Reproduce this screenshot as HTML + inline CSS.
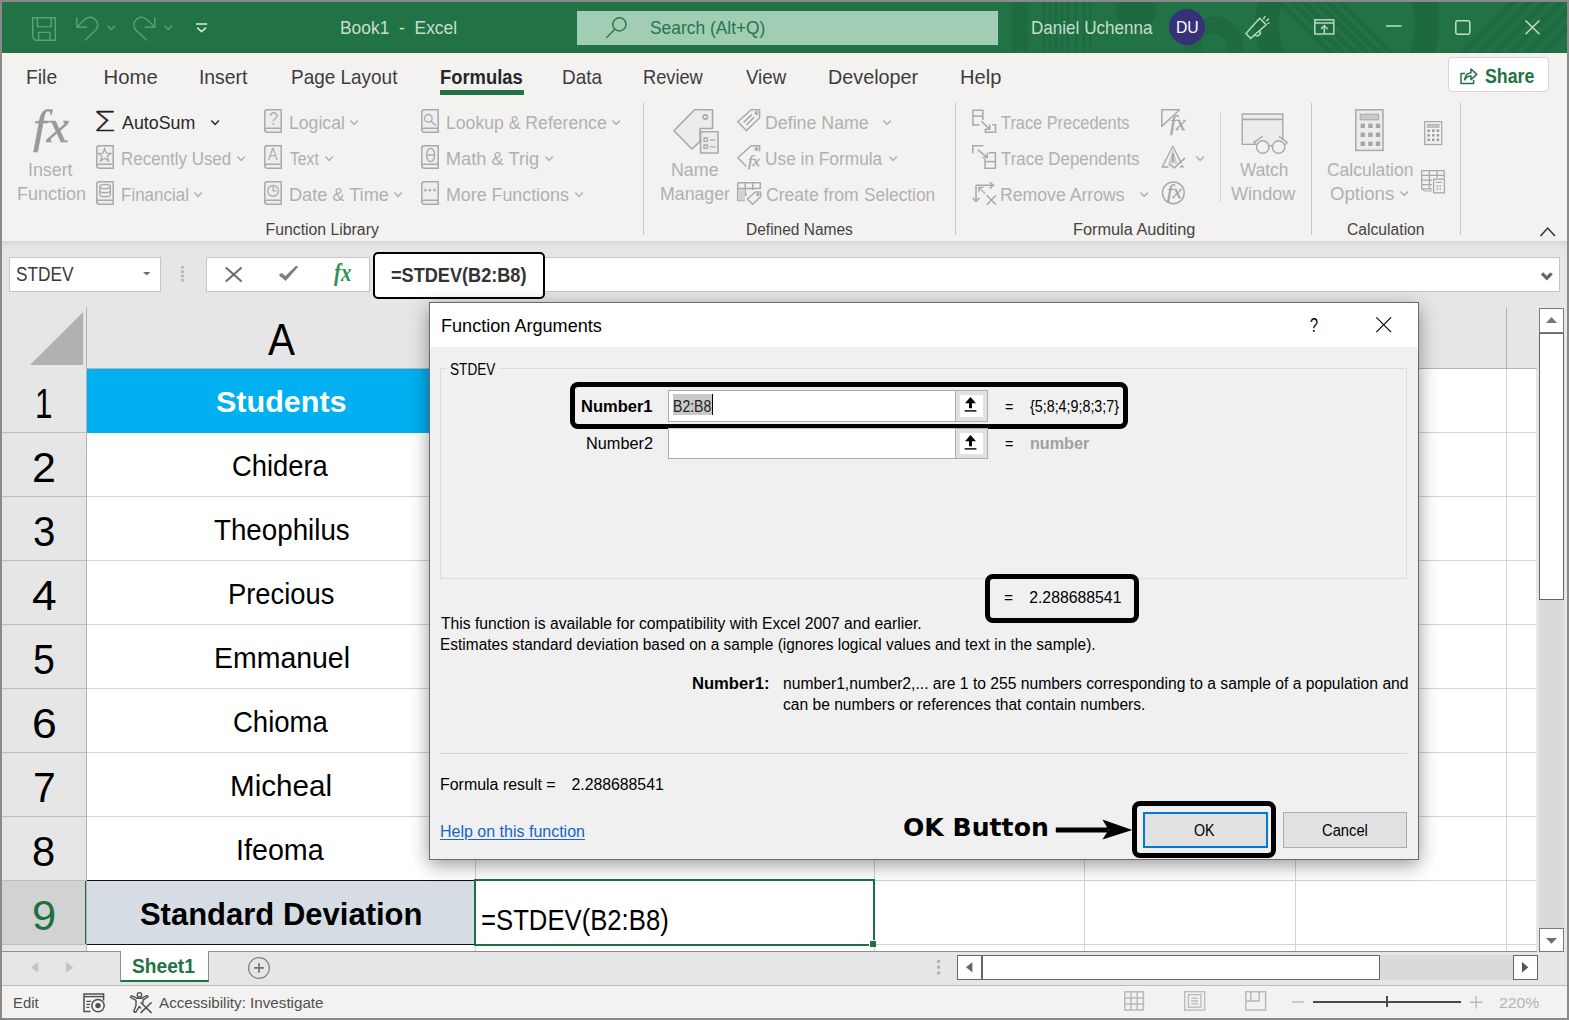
<!DOCTYPE html><html lang="en"><head><meta charset="utf-8"><title>Book1 - Excel</title><style>
html,body{margin:0;padding:0;background:#8a8a8a;}
body{width:1569px;height:1020px;overflow:hidden;font-family:"Liberation Sans",sans-serif;}
#app{position:relative;width:1569px;height:1020px;overflow:hidden;background:#8a8a8a;}
#app div,#app span,#app svg,#app a,#app button,#app header,#app nav,#app section,#app footer,#app label,#app p,#app h1{position:absolute;box-sizing:border-box;margin:0;padding:0;}
.t{white-space:pre;transform-origin:0 0;display:block;}
svg{overflow:visible;}
button{font:inherit;appearance:none;-webkit-appearance:none;text-align:left;}
</style></head><body><div id="app">
<div class="window" style="left:2px;top:2px;width:1565px;height:1016px;background:#e6e6e6;overflow:hidden;">
<header class="titlebar" style="left:0px;top:0px;width:1565px;height:51px;background:#217346;overflow:hidden;">
<svg style="left:0px;top:0px;" width="1565" height="51" viewBox="2 2 1565 51"><g fill="none" stroke="#1e6a3f" opacity="0.9">
<rect x="1012" y="0" width="16" height="51" fill="#1f6c41" stroke="none"/>
<path d="M1044 0v51M1050 0v51M1056 0v51M1062 0v51M1068 0v51M1076 0v51M1084 0v51M1090 0v51" stroke-width="2.2"/>
<circle cx="1136" cy="11" r="20" fill="#1f6940" stroke="none"/>
<circle cx="1214" cy="46" r="21" stroke-width="17" stroke="#1f6a40"/>
<circle cx="1347" cy="24" r="80" stroke-width="24" stroke="#1f6940"/>
<path d="M1285 -5l60 60M1297 -5l60 60M1309 -5l60 60M1321 -5l60 60M1333 -5l60 60M1273 -5l60 60" stroke-width="5" stroke="#1f6a40"/>
<path d="M1460 55l60 -60M1476 55l60 -60M1492 55l60 -60M1508 55l60 -60M1524 55l60 -60M1540 55l60 -60" stroke-width="6" stroke="#1f6a40"/>
</g></svg>
<svg style="left:30px;top:15px;" width="24" height="24" viewBox="0 0 24 24"><g fill="none" stroke="#5c9f7b" stroke-width="1.4"><path d="M0.7 0.7H23.3V23.3H3.6L0.7 20.4Z"/><path d="M5.4 0.7V9.6H19.2V0.7"/><path d="M6.6 23.3V15.4H18V23.3"/></g></svg>
<svg style="left:74px;top:15px;" width="22" height="24" viewBox="0 0 22 24"><g fill="none" stroke="#5c9f7b" stroke-width="1.4"><path d="M0.8 0.2V10.2H11"/><path d="M1.2 9.8L8.6 2.6A7.6 7.6 0 0 1 19.6 13.2L8.6 23.6"/></g></svg>
<svg style="left:105px;top:23px;" width="9" height="6" viewBox="0 0 9 6"><path d="M0.4 0.5L4.3 4.5L8.2 0.5" fill="none" stroke="#5c9f7b" stroke-width="1.4"/></svg>
<svg style="left:132px;top:15px;" width="22" height="24" viewBox="0 0 22 24"><g fill="none" stroke="#5c9f7b" stroke-width="1.4" transform="translate(21.6,0) scale(-1,1)"><path d="M0.8 0.2V10.2H11"/><path d="M1.2 9.8L8.6 2.6A7.6 7.6 0 0 1 19.6 13.2L8.6 23.6"/></g></svg>
<svg style="left:162px;top:23px;" width="9" height="6" viewBox="0 0 9 6"><path d="M0.4 0.5L4.3 4.5L8.2 0.5" fill="none" stroke="#5c9f7b" stroke-width="1.4"/></svg>
<svg style="left:194px;top:21px;" width="12" height="10" viewBox="0 0 12 10"><g fill="none" stroke="#d3e6da" stroke-width="1.6"><path d="M0 1H11.2"/><path d="M1.2 4.6L5.6 8.6L10 4.6"/></g></svg>
<span class="t" style="left:337.71px;top:17.00px;font-size:18.6px;line-height:18.6px;color:#c7ddd0;transform:scaleX(0.9364);">Book1  -  Excel</span>
<div class="search" style="left:575px;top:9px;width:420.5px;height:33.5px;background:#a0cdb4;">
<svg style="left:29px;top:5.5px;" width="21" height="22" viewBox="0 0 21 22"><g fill="none" stroke="#2a7a4d" stroke-width="1.5"><circle cx="13.4" cy="7.4" r="6.6"/><path d="M8.8 12.2L0.5 20.8"/></g></svg>
<span class="t" style="left:73.12px;top:8.00px;font-size:18.6px;line-height:18.6px;color:#24784a;transform:scaleX(0.9346);">Search (Alt+Q)</span>
</div>
<span class="t" style="left:1028.83px;top:17.00px;font-size:18.6px;line-height:18.6px;color:#c7ddd0;transform:scaleX(0.9183);">Daniel Uchenna</span>
<div class="avatar" style="left:1167px;top:7px;width:36px;height:36px;border-radius:50%;background:#373277;"></div>
<span class="t" style="left:1173.94px;top:17.00px;font-size:16.4px;line-height:16.4px;color:#fff;transform:scaleX(0.9595);">DU</span>
<svg style="left:1243px;top:12.5px;" width="25" height="25" viewBox="0 0 25 25"><g fill="none" stroke="#b9d6c5" stroke-width="1.5" stroke-linejoin="round"><path d="M14.6 3.2L21.2 9.8L5.6 23.4L1 18.6Z"/><path d="M9.8 19.6A3 3 0 0 0 14.6 16"/><path d="M18.4 4.4L20 1.2M21 6.2L23.8 3.6M22.4 8.6L24.4 8"/></g></svg>
<svg style="left:1312px;top:17px;" width="21" height="16" viewBox="0 0 21 16"><g fill="none" stroke="#b9d6c5" stroke-width="1.5"><rect x="0.8" y="0.8" width="19" height="14.2"/><path d="M0.8 4H19.8"/><path d="M10.3 14.5V7M7 10L10.3 6.6L13.6 10"/></g></svg>
<svg style="left:1384px;top:23px;" width="16" height="2" viewBox="0 0 16 2"><path d="M0 1H15.4" stroke="#c3dccd" stroke-width="1.5"/></svg>
<svg style="left:1453px;top:17.6px;" width="16" height="15" viewBox="0 0 16 15"><rect x="0.8" y="0.8" width="14" height="13.4" rx="1.6" fill="none" stroke="#c3dccd" stroke-width="1.5"/></svg>
<svg style="left:1522.5px;top:18px;" width="15" height="15" viewBox="0 0 15 15"><path d="M0.5 0.5L14.5 14.3M14.5 0.5L0.5 14.3" fill="none" stroke="#c3dccd" stroke-width="1.5"/></svg>
</header>
<section class="ribbon" style="left:0px;top:51px;width:1565px;height:188px;background:#f3f2f1;">
<nav class="tabs" style="left:0px;top:0px;width:1565px;height:47px;">
<span class="t" style="left:24.45px;top:14.00px;font-size:20.3px;line-height:20.3px;color:#3d3d3d;transform:scaleX(0.9538);">File</span>
<span class="t" style="left:101.57px;top:14.00px;font-size:20.3px;line-height:20.3px;color:#3d3d3d;">Home</span>
<span class="t" style="left:197.06px;top:14.00px;font-size:20.3px;line-height:20.3px;color:#3d3d3d;transform:scaleX(0.9524);">Insert</span>
<span class="t" style="left:289.18px;top:14.00px;font-size:20.3px;line-height:20.3px;color:#3d3d3d;transform:scaleX(0.9344);">Page Layout</span>
<span class="t" style="left:559.88px;top:14.00px;font-size:20.3px;line-height:20.3px;color:#3d3d3d;transform:scaleX(0.9355);">Data</span>
<span class="t" style="left:640.94px;top:14.00px;font-size:20.3px;line-height:20.3px;color:#3d3d3d;transform:scaleX(0.8983);">Review</span>
<span class="t" style="left:743.65px;top:14.00px;font-size:20.3px;line-height:20.3px;color:#3d3d3d;transform:scaleX(0.9211);">View</span>
<span class="t" style="left:825.52px;top:14.00px;font-size:20.3px;line-height:20.3px;color:#3d3d3d;transform:scaleX(0.9747);">Developer</span>
<span class="t" style="left:957.69px;top:14.00px;font-size:20.3px;line-height:20.3px;color:#3d3d3d;transform:scaleX(0.9903);">Help</span>
<span class="t" style="left:438.40px;top:14.00px;font-size:20.3px;line-height:20.3px;color:#262626;font-weight:700;transform:scaleX(0.9062);">Formulas</span>
<div class="tabline" style="left:438.2px;top:37.4px;width:83.8px;height:4.2px;background:#217346;"></div>
<button class="share" style="left:1446.2px;top:4.3px;width:100.6px;height:35.2px;background:#fff;border:1px solid #d6d6d6;border-radius:4px;">
<svg style="left:10.4px;top:8.3px;" width="18" height="17.6" viewBox="0 0 18 17.6"><g fill="none" stroke="#217346" stroke-width="1.5" stroke-linejoin="round"><path d="M5 6.4H1V16.6H13.6V13"/><path d="M4.6 12.8C5.2 8.4 8 6 11 5.8V2L16.8 7.4L11 12.6V9C8.4 9 6.2 10.2 4.6 12.8Z"/></g></svg>
<span class="t" style="left:36.01px;top:8.70px;font-size:19.6px;line-height:19.6px;color:#217346;font-weight:700;transform:scaleX(0.9068);">Share</span>
</button>
</nav>
<div class="group" style="left:8px;top:50px;width:633px;height:138px;">
<span class="t" style="left:22.70px;top:0.00px;font-size:47px;line-height:47px;color:#9a9a9a;font-style:italic;font-family:'Liberation Serif',serif;transform:scaleX(1.0593);-webkit-text-stroke:0.5px #9a9a9a;">fx</span>
<span class="t" style="left:18.39px;top:58.00px;font-size:18.3px;line-height:18.3px;color:#b0b0b0;transform:scaleX(0.9747);">Insert</span>
<span class="t" style="left:6.76px;top:82.00px;font-size:18.3px;line-height:18.3px;color:#b0b0b0;transform:scaleX(0.9826);">Function</span>
<span class="t" style="left:83.03px;top:5.00px;font-size:27.2px;line-height:27.2px;color:#1f1f1f;font-family:'DejaVu Sans Light','DejaVu Sans',sans-serif;transform:scaleX(1.3461);-webkit-text-stroke:0.35px #1f1f1f;">Σ</span>
<span class="t" style="left:112.30px;top:11.00px;font-size:18.3px;line-height:18.3px;color:#262626;transform:scaleX(0.9748);">AutoSum</span>
<svg style="left:201px;top:16.85px;" width="8.2" height="5.4" viewBox="0 0 8.2 5.4"><path d="M0.4 0.5L4.1 4.4L7.8 0.5" fill="none" stroke="#262626" stroke-width="1.5"/></svg>
<svg style="left:86.2px;top:41.9px;" width="18" height="24" viewBox="0 0 18 24"><g fill="none" stroke="#a9a9a9" stroke-width="1.5"><path d="M17.2 0.8H3.2A2.4 2.4 0 0 0 0.8 3.2V20.8A2.4 2.4 0 0 0 3.2 23.2H17.2Z" fill="#eeeeee"/><path d="M0.8 21.2A2 2 0 0 1 2.9 19.2H17.2" fill="#f3f2f1"/><path d="M8.6 3.5L10.2 8.1L15.2 8.3L11.3 11.3L12.7 16.0L8.6 13.2L4.5 16.0L5.9 11.3L2.0 8.3L7.0 8.1Z" stroke-width="1.2"/></g></svg>
<span class="t" style="left:110.94px;top:47.00px;font-size:18.3px;line-height:18.3px;color:#b0b0b0;transform:scaleX(0.9271);">Recently Used</span>
<svg style="left:227px;top:52.8px;" width="8.2" height="5.4" viewBox="0 0 8.2 5.4"><path d="M0.4 0.5L4.1 4.4L7.8 0.5" fill="none" stroke="#b0b0b0" stroke-width="1.5"/></svg>
<svg style="left:86.2px;top:77.9px;" width="18" height="24" viewBox="0 0 18 24"><g fill="none" stroke="#a9a9a9" stroke-width="1.5"><path d="M17.2 0.8H3.2A2.4 2.4 0 0 0 0.8 3.2V20.8A2.4 2.4 0 0 0 3.2 23.2H17.2Z" fill="#eeeeee"/><path d="M0.8 21.2A2 2 0 0 1 2.9 19.2H17.2" fill="#f3f2f1"/><g stroke-width="1.3"><ellipse cx="9.05" cy="5.5" rx="5.3" ry="2.2"/><path d="M3.75 5.5V13.4A5.3 2.2 0 0 0 14.35 13.4V5.5"/><path d="M3.75 9.4A5.3 2.2 0 0 0 14.35 9.4"/></g></g></svg>
<span class="t" style="left:110.94px;top:83.00px;font-size:18.3px;line-height:18.3px;color:#b0b0b0;transform:scaleX(0.9293);">Financial</span>
<svg style="left:184px;top:88.7px;" width="8.2" height="5.4" viewBox="0 0 8.2 5.4"><path d="M0.4 0.5L4.1 4.4L7.8 0.5" fill="none" stroke="#b0b0b0" stroke-width="1.5"/></svg>
<svg style="left:254px;top:5.9px;" width="18" height="24" viewBox="0 0 18 24"><g fill="none" stroke="#a9a9a9" stroke-width="1.5"><path d="M17.2 0.8H3.2A2.4 2.4 0 0 0 0.8 3.2V20.8A2.4 2.4 0 0 0 3.2 23.2H17.2Z" fill="#eeeeee"/><path d="M0.8 21.2A2 2 0 0 1 2.9 19.2H17.2" fill="#f3f2f1"/></g></svg>
<span class="t" style="left:259.24px;top:7.00px;font-size:18.6px;line-height:18.6px;color:#b2b2b2;transform:scaleX(0.8849);">?</span>
<span class="t" style="left:278.89px;top:11.00px;font-size:18.3px;line-height:18.3px;color:#b0b0b0;transform:scaleX(0.9646);">Logical</span>
<svg style="left:340.4px;top:16.85px;" width="8.2" height="5.4" viewBox="0 0 8.2 5.4"><path d="M0.4 0.5L4.1 4.4L7.8 0.5" fill="none" stroke="#b0b0b0" stroke-width="1.5"/></svg>
<svg style="left:254px;top:41.9px;" width="18" height="24" viewBox="0 0 18 24"><g fill="none" stroke="#a9a9a9" stroke-width="1.5"><path d="M17.2 0.8H3.2A2.4 2.4 0 0 0 0.8 3.2V20.8A2.4 2.4 0 0 0 3.2 23.2H17.2Z" fill="#eeeeee"/><path d="M0.8 21.2A2 2 0 0 1 2.9 19.2H17.2" fill="#f3f2f1"/></g></svg>
<span class="t" style="left:258.40px;top:44.00px;font-size:16px;line-height:16px;color:#aeaeae;transform:scaleX(0.9023);">A</span>
<span class="t" style="left:279.99px;top:47.00px;font-size:18.3px;line-height:18.3px;color:#b0b0b0;transform:scaleX(0.8586);">Text</span>
<svg style="left:315.1px;top:52.8px;" width="8.2" height="5.4" viewBox="0 0 8.2 5.4"><path d="M0.4 0.5L4.1 4.4L7.8 0.5" fill="none" stroke="#b0b0b0" stroke-width="1.5"/></svg>
<svg style="left:254px;top:77.9px;" width="18" height="24" viewBox="0 0 18 24"><g fill="none" stroke="#a9a9a9" stroke-width="1.5"><path d="M17.2 0.8H3.2A2.4 2.4 0 0 0 0.8 3.2V20.8A2.4 2.4 0 0 0 3.2 23.2H17.2Z" fill="#eeeeee"/><path d="M0.8 21.2A2 2 0 0 1 2.9 19.2H17.2" fill="#f3f2f1"/><g stroke-width="1.3"><circle cx="9.1" cy="9.9" r="5.4"/><path d="M9.1 5.6V9.9H12.6"/></g></g></svg>
<span class="t" style="left:278.85px;top:83.00px;font-size:18.3px;line-height:18.3px;color:#b0b0b0;transform:scaleX(0.9928);">Date &amp; Time</span>
<svg style="left:384.4px;top:88.7px;" width="8.2" height="5.4" viewBox="0 0 8.2 5.4"><path d="M0.4 0.5L4.1 4.4L7.8 0.5" fill="none" stroke="#b0b0b0" stroke-width="1.5"/></svg>
<svg style="left:411px;top:5.9px;" width="18" height="24" viewBox="0 0 18 24"><g fill="none" stroke="#a9a9a9" stroke-width="1.5"><path d="M17.2 0.8H3.2A2.4 2.4 0 0 0 0.8 3.2V20.8A2.4 2.4 0 0 0 3.2 23.2H17.2Z" fill="#eeeeee"/><path d="M0.8 21.2A2 2 0 0 1 2.9 19.2H17.2" fill="#f3f2f1"/><g stroke-width="1.3"><circle cx="7.3" cy="9.3" r="3.8"/><path d="M10 12L14.8 16.4"/></g></g></svg>
<span class="t" style="left:435.79px;top:11.00px;font-size:18.3px;line-height:18.3px;color:#b0b0b0;transform:scaleX(0.9641);">Lookup &amp; Reference</span>
<svg style="left:602.4px;top:16.85px;" width="8.2" height="5.4" viewBox="0 0 8.2 5.4"><path d="M0.4 0.5L4.1 4.4L7.8 0.5" fill="none" stroke="#b0b0b0" stroke-width="1.5"/></svg>
<svg style="left:411px;top:41.9px;" width="18" height="24" viewBox="0 0 18 24"><g fill="none" stroke="#a9a9a9" stroke-width="1.5"><path d="M17.2 0.8H3.2A2.4 2.4 0 0 0 0.8 3.2V20.8A2.4 2.4 0 0 0 3.2 23.2H17.2Z" fill="#eeeeee"/><path d="M0.8 21.2A2 2 0 0 1 2.9 19.2H17.2" fill="#f3f2f1"/><g stroke-width="1.3"><ellipse cx="9.6" cy="10" rx="4" ry="6.6"/><path d="M5.6 10H13.6"/></g></g></svg>
<span class="t" style="left:435.74px;top:47.00px;font-size:18.3px;line-height:18.3px;color:#b0b0b0;">Math &amp; Trig</span>
<svg style="left:535.2px;top:52.8px;" width="8.2" height="5.4" viewBox="0 0 8.2 5.4"><path d="M0.4 0.5L4.1 4.4L7.8 0.5" fill="none" stroke="#b0b0b0" stroke-width="1.5"/></svg>
<svg style="left:411px;top:77.9px;" width="18" height="24" viewBox="0 0 18 24"><g fill="none" stroke="#a9a9a9" stroke-width="1.5"><path d="M17.2 0.8H3.2A2.4 2.4 0 0 0 0.8 3.2V20.8A2.4 2.4 0 0 0 3.2 23.2H17.2Z" fill="#eeeeee"/><path d="M0.8 21.2A2 2 0 0 1 2.9 19.2H17.2" fill="#f3f2f1"/><g fill="#b0b0b0" stroke="none"><circle cx="4.4" cy="9.2" r="1.35"/><circle cx="8.9" cy="9.2" r="1.35"/><circle cx="13.5" cy="9.2" r="1.35"/></g></g></svg>
<span class="t" style="left:435.77px;top:83.00px;font-size:18.3px;line-height:18.3px;color:#b0b0b0;transform:scaleX(0.9748);">More Functions</span>
<svg style="left:565px;top:88.7px;" width="8.2" height="5.4" viewBox="0 0 8.2 5.4"><path d="M0.4 0.5L4.1 4.4L7.8 0.5" fill="none" stroke="#b0b0b0" stroke-width="1.5"/></svg>
<span class="t" style="left:255.54px;top:119.00px;font-size:15.8px;line-height:15.8px;color:#444;">Function Library</span>
</div>
<div class="sep" style="left:640.9px;top:50.3px;width:1px;height:131.5px;background:#c8c6c4;"></div>
<div class="group" style="left:642px;top:50px;width:311px;height:138px;">
<svg style="left:29px;top:6px;" width="46" height="45" viewBox="0 0 46 45"><g fill="none" stroke="#a9a9a9" stroke-width="1.6" stroke-linejoin="round"><path d="M39.6 19.5V0.8H21.6L0.9 21.8L19 40L27 32.4V19.5Z" fill="#ececec"/><circle cx="32.3" cy="8" r="2.1" fill="#f3f2f1"/><rect x="27.6" y="22.8" width="17.4" height="21.2" fill="#ececec"/><path d="M31 29H34.4V32.4H31ZM31 36H34.4V39.4H31ZM37 30.8H42.4M37 37.8H42.4" stroke-width="1.3"/></g></svg>
<span class="t" style="left:27.17px;top:58.00px;font-size:18.3px;line-height:18.3px;color:#b0b0b0;transform:scaleX(0.9748);">Name</span>
<span class="t" style="left:15.58px;top:82.00px;font-size:18.3px;line-height:18.3px;color:#b0b0b0;transform:scaleX(0.9702);">Manager</span>
<svg style="left:93px;top:6px;" width="24" height="23" viewBox="0 0 24 23"><g fill="none" stroke="#a9a9a9" stroke-width="1.5"stroke-linejoin="round"><path d="M22.6 0.8V8.8L9.4 21.6L0.8 12.8L14.2 0.8Z"/><circle cx="19.4" cy="4" r="1.2"/><path d="M6.6 13.4L15 5.4M9.2 16L17.4 8"/></g></svg>
<span class="t" style="left:120.88px;top:11.00px;font-size:18.3px;line-height:18.3px;color:#b0b0b0;transform:scaleX(0.9719);">Define Name</span>
<svg style="left:239.1px;top:16.85px;" width="8.2" height="5.4" viewBox="0 0 8.2 5.4"><path d="M0.4 0.5L4.1 4.4L7.8 0.5" fill="none" stroke="#b0b0b0" stroke-width="1.5"/></svg>
<svg style="left:93px;top:42px;" width="24" height="24" viewBox="0 0 24 24"><g fill="none" stroke="#a9a9a9" stroke-width="1.5" stroke-linejoin="round"><path d="M22.6 6.6V0.8H14.2L0.8 12.8L9.4 21.6"/><circle cx="19.4" cy="4" r="1.2"/></g></svg>
<span class="t" style="left:104.44px;top:50.00px;font-size:15.6px;line-height:15.6px;color:#a4a4a4;font-style:italic;font-family:'Liberation Serif',serif;transform:scaleX(1.0547);-webkit-text-stroke:0.3px #a4a4a4;">fx</span>
<span class="t" style="left:121.00px;top:47.00px;font-size:18.3px;line-height:18.3px;color:#b0b0b0;transform:scaleX(0.9458);">Use in Formula</span>
<svg style="left:245.2px;top:52.8px;" width="8.2" height="5.4" viewBox="0 0 8.2 5.4"><path d="M0.4 0.5L4.1 4.4L7.8 0.5" fill="none" stroke="#b0b0b0" stroke-width="1.5"/></svg>
<svg style="left:93px;top:79px;" width="25" height="23" viewBox="0 0 25 23"><g fill="none" stroke="#a9a9a9" stroke-width="1.5" stroke-linejoin="round"><path d="M0.7 0.7H23.3V7M0.7 0.7V18.6H8"/><path d="M0.7 6.6H23.3M0.7 12.6H10M8.2 0.7V14M15.8 0.7V8" /><rect x="1" y="7" width="7" height="11.4" fill="#d2d2d2" stroke="none"/><path d="M23.6 10V14.8L15.6 22.2L10.4 17L18.2 10Z" fill="#f3f2f1"/><circle cx="20.8" cy="12.6" r="0.9"/></g></svg>
<span class="t" style="left:121.52px;top:83.00px;font-size:18.3px;line-height:18.3px;color:#b0b0b0;transform:scaleX(0.9606);">Create from</span>
<span class="t" style="left:220.22px;top:83.00px;font-size:18.3px;line-height:18.3px;color:#b0b0b0;transform:scaleX(0.9469);">Selection</span>
<span class="t" style="left:101.66px;top:119.00px;font-size:15.8px;line-height:15.8px;color:#444;transform:scaleX(0.9815);">Defined Names</span>
</div>
<div class="sep" style="left:952.8px;top:50.3px;width:1px;height:131.5px;background:#c8c6c4;"></div>
<div class="group" style="left:954px;top:50px;width:355px;height:138px;">
<svg style="left:15.7px;top:6px;" width="25" height="24" viewBox="0 0 25 24"><g fill="none" stroke="#a9a9a9" stroke-width="1.5"><path d="M7.6 16H0.9V1.3H10.9V11"/><path d="M0.9 7.2H10.9"/><path d="M9.4 12.4L17.4 19.8M12.8 20.2H17.7V15.4"/><path d="M20.2 15.8H23.5V23.2H13.4V21"/></g></svg>
<span class="t" style="left:44.87px;top:11.00px;font-size:18.3px;line-height:18.3px;color:#b0b0b0;transform:scaleX(0.8939);">Trace Precedents</span>
<svg style="left:15.7px;top:42px;" width="25" height="24" viewBox="0 0 25 24"><g fill="none" stroke="#a9a9a9" stroke-width="1.5"><path d="M11.5 0.8H0.8V8.4"/><path d="M5.6 4.6L14.8 12.2M10.3 12.6H15.3V7.7"/><path d="M16.8 7.8H23.4V23.2H13V14"/><path d="M13 16.6H23.4"/></g></svg>
<span class="t" style="left:44.86px;top:47.00px;font-size:18.3px;line-height:18.3px;color:#b0b0b0;transform:scaleX(0.9256);">Trace Dependents</span>
<svg style="left:15.7px;top:78px;" width="25" height="25" viewBox="0 0 25 25"><g fill="none" stroke="#a9a9a9" stroke-width="1.5"><path d="M4 4V20M0.7 16.8L4 20.4L7.4 16.8"/><path d="M4 4.3H21M17.8 1L21.4 4.3L17.8 7.6"/><path d="M13.2 12.6L7 6.6M11.6 6.4H6.8V11.2" stroke-width="1.3"/><path d="M14.8 14.3L23.9 23.7M23.9 14.3L14.8 23.7"/></g></svg>
<span class="t" style="left:43.79px;top:83.00px;font-size:18.3px;line-height:18.3px;color:#b0b0b0;transform:scaleX(0.9658);">Remove Arrows</span>
<svg style="left:184px;top:88.7px;" width="8.2" height="5.4" viewBox="0 0 8.2 5.4"><path d="M0.4 0.5L4.1 4.4L7.8 0.5" fill="none" stroke="#b0b0b0" stroke-width="1.5"/></svg>
<svg style="left:205.4px;top:6px;" width="20" height="18" viewBox="0 0 20 18"><path d="M0.8 0.7H18.6L0.8 17.2Z" fill="none" stroke="#a9a9a9" stroke-width="1.5" stroke-linejoin="round"/></svg>
<span class="t" style="left:213.98px;top:10.00px;font-size:20.5px;line-height:20.5px;color:#a4a4a4;font-style:italic;font-family:'Liberation Serif',serif;transform:scaleX(1.0517);-webkit-text-stroke:0.3px #a4a4a4;">fx</span>
<svg style="left:205.4px;top:42px;" width="25" height="24" viewBox="0 0 25 24"><g fill="none" stroke="#a9a9a9" stroke-width="1.4" stroke-linejoin="round"><path d="M7.4 22H1.2L11.85 1.2L20.4 18.4"/><path d="M11.85 5.6L8 18H15.7Z" fill="#cfcfcf" stroke="#c4c4c4" stroke-width="0.8"/><path d="M11.85 8.4V16.4" stroke="#9c9c9c" stroke-width="1.6"/><path d="M7.8 18.8L13.2 22.8L24 12.8" stroke-width="1.6"/><path d="M18.8 22.2L21 20L23.2 22.2Z" fill="#a9a9a9" stroke-width="0.5"/></g></svg>
<svg style="left:240px;top:52.8px;" width="8.2" height="5.4" viewBox="0 0 8.2 5.4"><path d="M0.4 0.5L4.1 4.4L7.8 0.5" fill="none" stroke="#b0b0b0" stroke-width="1.5"/></svg>
<svg style="left:205.4px;top:78px;" width="25" height="25" viewBox="0 0 25 25"><circle cx="12.35" cy="11.8" r="10.9" fill="none" stroke="#a9a9a9" stroke-width="1.5"/></svg>
<span class="t" style="left:210.70px;top:80.00px;font-size:18.5px;line-height:18.5px;color:#a4a4a4;font-style:italic;font-family:'Liberation Serif',serif;transform:scaleX(1.0964);-webkit-text-stroke:0.3px #a4a4a4;">fx</span>
<div class="sep" style="left:263.8px;top:9.4px;width:1px;height:89.8px;background:#d4d2d0;"></div>
<svg style="left:285px;top:10px;" width="47" height="42" viewBox="0 0 47 42"><g fill="none" stroke="#a9a9a9" stroke-width="1.4"><path d="M17 31.4H1.2V1H41.8V27" fill="#ececec"/><path d="M1.2 6.4H41.8" stroke-width="1.6"/><circle cx="21.8" cy="34" r="6.2" fill="#f3f2f1"/><circle cx="37.6" cy="34" r="6.2" fill="#f3f2f1"/><path d="M28 33.4A2 2 0 0 1 31.4 33.4"/><path d="M15.8 32L12.8 29.4L21.6 23.4M43.6 32L46.2 29.4L38 23.4"/></g></svg>
<span class="t" style="left:284.06px;top:58.00px;font-size:18.3px;line-height:18.3px;color:#b0b0b0;transform:scaleX(0.9448);">Watch</span>
<span class="t" style="left:275.05px;top:82.00px;font-size:18.3px;line-height:18.3px;color:#b0b0b0;transform:scaleX(0.9892);">Window</span>
<span class="t" style="left:116.50px;top:119.00px;font-size:15.8px;line-height:15.8px;color:#444;transform:scaleX(1.0319);">Formula Auditing</span>
</div>
<div class="sep" style="left:1308.8px;top:50.3px;width:1px;height:131.5px;background:#c8c6c4;"></div>
<div class="group" style="left:1310px;top:50px;width:148px;height:138px;">
<svg style="left:43px;top:6px;" width="29" height="43" viewBox="0 0 29 43"><g fill="none" stroke="#a9a9a9" stroke-width="1.5"><rect x="0.8" y="0.8" width="27.2" height="40.6" fill="#ececec"/><rect x="5.2" y="5.2" width="18.4" height="5.6" fill="#c9c9c9" stroke-width="1.1"/><rect x="5.6" y="14.6" width="4.4" height="4.4" fill="#a6a6a6" stroke="none"/><rect x="5.6" y="23.6" width="4.4" height="4.4" fill="#a6a6a6" stroke="none"/><rect x="5.6" y="32.6" width="4.4" height="4.4" fill="#a6a6a6" stroke="none"/><rect x="13.2" y="14.6" width="4.4" height="4.4" fill="#a6a6a6" stroke="none"/><rect x="13.2" y="23.6" width="4.4" height="4.4" fill="#a6a6a6" stroke="none"/><rect x="13.2" y="32.6" width="4.4" height="4.4" fill="#a6a6a6" stroke="none"/><rect x="20.8" y="14.6" width="4.4" height="4.4" fill="#a6a6a6" stroke="none"/><rect x="20.8" y="23.6" width="4.4" height="4.4" fill="#a6a6a6" stroke="none"/><rect x="20.8" y="32.6" width="4.4" height="4.4" fill="#a6a6a6" stroke="none"/></g></svg>
<span class="t" style="left:15.13px;top:58.00px;font-size:18.3px;line-height:18.3px;color:#b0b0b0;transform:scaleX(0.9550);">Calculation</span>
<span class="t" style="left:17.66px;top:82.00px;font-size:18.3px;line-height:18.3px;color:#b0b0b0;transform:scaleX(1.0191);">Options</span>
<svg style="left:88.2px;top:88.2px;" width="8.6" height="5.4" viewBox="0 0 8.6 5.4"><path d="M0.4 0.5L4.3 4.4L8.2 0.5" fill="none" stroke="#b0b0b0" stroke-width="1.5"/></svg>
<svg style="left:112px;top:18px;" width="19" height="24.4" viewBox="0 0 19 24.4"><g fill="none" stroke="#a9a9a9" stroke-width="1.3"><rect x="0.7" y="0.7" width="17" height="22.8"/><rect x="3.4" y="3.6" width="11.6" height="2.6" fill="#c9c9c9" stroke-width="0.9"/><rect x="3.4" y="8.4" width="2.6" height="2.6" fill="#a0a0a0" stroke="none"/><rect x="3.4" y="13" width="2.6" height="2.6" fill="#a0a0a0" stroke="none"/><rect x="3.4" y="17.6" width="2.6" height="2.6" fill="#a0a0a0" stroke="none"/><rect x="8" y="8.4" width="2.6" height="2.6" fill="#a0a0a0" stroke="none"/><rect x="8" y="13" width="2.6" height="2.6" fill="#a0a0a0" stroke="none"/><rect x="8" y="17.6" width="2.6" height="2.6" fill="#a0a0a0" stroke="none"/><rect x="12.6" y="8.4" width="2.6" height="2.6" fill="#a0a0a0" stroke="none"/><rect x="12.6" y="13" width="2.6" height="2.6" fill="#a0a0a0" stroke="none"/><rect x="12.6" y="17.6" width="2.6" height="2.6" fill="#a0a0a0" stroke="none"/></g></svg>
<svg style="left:108.8px;top:67px;" width="25" height="24" viewBox="0 0 25 24"><g fill="none" stroke="#a9a9a9" stroke-width="1.3"><path d="M11 18.8H0.7V0.7H23.2V8"/><path d="M0.7 5.4H23.2M0.7 10.2H11M0.7 14.6H11M8.4 0.7V18.8M16 0.7V8"/><path d="M0.7 18.8L3 21H11" stroke-width="1"/><rect x="12.6" y="9.2" width="10.8" height="13.6" fill="#f3f2f1"/><path d="M15 12.4H21" stroke-width="1.1"/><rect x="15.6" y="15.4" width="1.5" height="1.5" fill="#a0a0a0" stroke="none"/><rect x="15.6" y="18.3" width="1.5" height="1.5" fill="#a0a0a0" stroke="none"/><rect x="18.5" y="15.4" width="1.5" height="1.5" fill="#a0a0a0" stroke="none"/><rect x="18.5" y="18.3" width="1.5" height="1.5" fill="#a0a0a0" stroke="none"/></g></svg>
<span class="t" style="left:34.82px;top:119.00px;font-size:15.8px;line-height:15.8px;color:#444;transform:scaleX(0.9922);">Calculation</span>
</div>
<div class="sep" style="left:1457.9px;top:50.3px;width:1px;height:131.5px;background:#c8c6c4;"></div>
<svg style="left:1538px;top:174px;" width="15.4" height="9.6" viewBox="0 0 15.4 9.6"><path d="M0.5 9L7.7 1L14.9 9" fill="none" stroke="#333" stroke-width="1.5"/></svg>
</section>
<div class="formulabar" style="left:0px;top:239px;width:1565px;height:66px;background:linear-gradient(#d6d6d6 0px,#e2e2e2 5px,#e6e6e6 9px);">
<div class="namebox" style="left:7.4px;top:16px;width:151.2px;height:35px;background:#fff;border:1px solid #c6c6c6;">
<span class="t" style="left:5.42px;top:7.00px;font-size:19.3px;line-height:19.3px;color:#3a3a3a;transform:scaleX(0.8959);">STDEV</span>
<svg style="left:132.4px;top:14.4px;" width="7.4" height="3.6" viewBox="0 0 7.4 3.6"><path d="M0 0H7.4L3.7 3.6Z" fill="#6e6e6e"/></svg>
</div>
<svg style="left:179px;top:25px;" width="3" height="16" viewBox="0 0 3 16"><g fill="#b5b5b5"><rect x="0" y="0" width="2.8" height="2.6"/><rect x="0" y="4.3" width="2.8" height="2.6"/><rect x="0" y="8.6" width="2.8" height="2.6"/><rect x="0" y="12.9" width="2.8" height="2.6"/></g></svg>
<div class="fxbuttons" style="left:204px;top:16px;width:163.7px;height:35px;background:#fff;border:1px solid #c6c6c6;">
<svg style="left:18px;top:9px;" width="17.4" height="15" viewBox="0 0 17.4 15"><path d="M0.8 0.6L16.6 14.4M16.6 0.6L0.8 14.4" fill="none" stroke="#6b6b6b" stroke-width="2"/></svg>
<svg style="left:71.6px;top:8.4px;" width="19.4" height="16" viewBox="0 0 19.4 16"><path d="M0.4 9.2L6.6 14.6L18.8 0.8L17 0.2L6.4 10.4L2.2 7.2Z" fill="#7d7d7d" stroke="#7d7d7d" stroke-width="0.8" stroke-linejoin="round"/></svg>
<span class="t" style="left:126.60px;top:2.00px;font-size:25px;line-height:25px;color:#2f8f55;font-weight:700;font-style:italic;font-family:'Liberation Serif',serif;transform:scaleX(0.8296);">fx</span>
</div>
<div class="formulainput" style="left:370.6px;top:16px;width:1187.2px;height:35px;background:#fff;border:1px solid #c6c6c6;">
<svg style="left:1167.2px;top:14px;" width="11.6" height="8" viewBox="0 0 11.6 8"><path d="M1 1.4L5.8 6.2L10.6 1.4" fill="none" stroke="#666" stroke-width="3.2"/></svg>
</div>
<div class="annot" style="left:370.6px;top:11px;width:172.8px;height:47px;background:#fff;border:2px solid #000;border-radius:5px;"></div>
<span class="t" style="left:389.37px;top:25.00px;font-size:19.3px;line-height:19.3px;color:#333;font-weight:700;transform:scaleX(0.9401);">=STDEV(B2:B8)</span>
</div>
<div class="grid" style="left:0px;top:305px;width:1565px;height:644px;background:#e6e6e6;overflow:hidden;">
<div class="cells" style="left:85px;top:61px;width:1449.4px;height:583px;background:#fff;overflow:hidden;">
<div class="gl" style="left:0px;top:64px;width:1450px;height:1px;background:#d4d4d4;"></div>
<div class="gl" style="left:0px;top:128px;width:1450px;height:1px;background:#d4d4d4;"></div>
<div class="gl" style="left:0px;top:192px;width:1450px;height:1px;background:#d4d4d4;"></div>
<div class="gl" style="left:0px;top:256px;width:1450px;height:1px;background:#d4d4d4;"></div>
<div class="gl" style="left:0px;top:320px;width:1450px;height:1px;background:#d4d4d4;"></div>
<div class="gl" style="left:0px;top:384px;width:1450px;height:1px;background:#d4d4d4;"></div>
<div class="gl" style="left:0px;top:448px;width:1450px;height:1px;background:#d4d4d4;"></div>
<div class="gl" style="left:0px;top:512px;width:1450px;height:1px;background:#d4d4d4;"></div>
<div class="gl" style="left:0px;top:576px;width:1450px;height:1px;background:#d4d4d4;"></div>
<div class="gl" style="left:388px;top:0px;width:1px;height:583px;background:#d4d4d4;"></div>
<div class="gl" style="left:787px;top:0px;width:1px;height:583px;background:#d4d4d4;"></div>
<div class="gl" style="left:997.2px;top:0px;width:1px;height:583px;background:#d4d4d4;"></div>
<div class="gl" style="left:1208.4px;top:0px;width:1px;height:583px;background:#d4d4d4;"></div>
<div class="gl" style="left:1419.2px;top:0px;width:1px;height:583px;background:#d4d4d4;"></div>
<div class="cellA1" style="left:0px;top:0px;width:388px;height:64.5px;background:#00b0f0;"></div>
<span class="t" style="left:129.06px;top:19.00px;font-size:30.3px;line-height:30.3px;color:#fff;font-weight:700;transform:scaleX(1.0075);">Students</span>
<span class="t" style="left:145.33px;top:83.00px;font-size:29.3px;line-height:29.3px;color:#000;transform:scaleX(0.9332);">Chidera</span>
<span class="t" style="left:126.55px;top:147.00px;font-size:29.3px;line-height:29.3px;color:#000;transform:scaleX(0.9468);">Theophilus</span>
<span class="t" style="left:140.61px;top:211.00px;font-size:29.3px;line-height:29.3px;color:#000;transform:scaleX(0.9339);">Precious</span>
<span class="t" style="left:126.52px;top:275.00px;font-size:29.3px;line-height:29.3px;color:#000;transform:scaleX(0.9712);">Emmanuel</span>
<span class="t" style="left:145.62px;top:339.00px;font-size:29.3px;line-height:29.3px;color:#000;transform:scaleX(0.9393);">Chioma</span>
<span class="t" style="left:143.23px;top:403.00px;font-size:29.3px;line-height:29.3px;color:#000;transform:scaleX(1.0104);">Micheal</span>
<span class="t" style="left:149.22px;top:467.00px;font-size:29.3px;line-height:29.3px;color:#000;transform:scaleX(0.9787);">Ifeoma</span>
<div class="cellA9" style="left:0px;top:512.4px;width:388px;height:64.6px;background:#d6dce4;border-top:1.4px solid #111;border-bottom:1.4px solid #111;"></div>
<span class="t" style="left:52.95px;top:531.00px;font-size:31px;line-height:31px;color:#000;font-weight:700;">Standard Deviation</span>
<div class="cellB9" style="left:387px;top:511px;width:401px;height:67px;background:#fff;border:2px solid #1e6f41;"></div>
<span class="t" style="left:393.98px;top:538.00px;font-size:28.6px;line-height:28.6px;color:#000;transform:scaleX(0.8984);">=STDEV(B2:B8)</span>
<div class="handle" style="left:782px;top:572px;width:7px;height:7px;background:#1e6f41;border:1px solid #fff;border-right:0;border-bottom:0;"></div>
</div>
<div class="colhdr" style="left:0px;top:0px;width:1535px;height:61.4px;background:#e6e6e6;">
<svg style="left:28px;top:4.5px;" width="53.4" height="53.2" viewBox="0 0 53.4 53.2"><path d="M53.2 0V53H0Z" fill="#b1b1b1"/></svg>
<div style="left:84px;top:0px;width:1px;height:61px;background:#b4b4b4;"></div>
<div style="left:1504.2px;top:0px;width:1px;height:61px;background:#b4b4b4;"></div>
<div style="left:0px;top:60.6px;width:1535px;height:1px;background:#b4b4b4;"></div>
<span class="t" style="left:265.60px;top:12.00px;font-size:43.6px;line-height:43.6px;color:#000;transform:scaleX(0.9278);">A</span>
</div>
<div class="rowhdr" style="left:0px;top:61.4px;width:84.6px;height:583px;background:#e6e6e6;border-right:1px solid #b0b0b0;overflow:hidden;">
<div class="rowsel" style="left:0px;top:512px;width:84.6px;height:64.2px;background:#d2d2d2;border-right:2px solid #1e6f41;"></div>
<div style="left:0px;top:63.6px;width:85px;height:1px;background:#bdbdbd;"></div>
<span class="t" style="left:32.54px;top:13.60px;font-size:42.6px;line-height:42.6px;color:#000;transform:scaleX(0.7381);">1</span>
<div style="left:0px;top:127.6px;width:85px;height:1px;background:#bdbdbd;"></div>
<span class="t" style="left:29.95px;top:77.60px;font-size:42.6px;line-height:42.6px;color:#000;transform:scaleX(1.0108);">2</span>
<div style="left:0px;top:191.6px;width:85px;height:1px;background:#bdbdbd;"></div>
<span class="t" style="left:30.79px;top:141.60px;font-size:42.6px;line-height:42.6px;color:#000;transform:scaleX(0.9439);">3</span>
<div style="left:0px;top:255.6px;width:85px;height:1px;background:#bdbdbd;"></div>
<span class="t" style="left:29.60px;top:205.60px;font-size:42.6px;line-height:42.6px;color:#000;transform:scaleX(1.0412);">4</span>
<div style="left:0px;top:319.6px;width:85px;height:1px;background:#bdbdbd;"></div>
<span class="t" style="left:31.03px;top:269.60px;font-size:42.6px;line-height:42.6px;color:#000;transform:scaleX(0.9241);">5</span>
<div style="left:0px;top:383.6px;width:85px;height:1px;background:#bdbdbd;"></div>
<span class="t" style="left:29.87px;top:333.60px;font-size:42.6px;line-height:42.6px;color:#000;transform:scaleX(1.0456);">6</span>
<div style="left:0px;top:447.6px;width:85px;height:1px;background:#bdbdbd;"></div>
<span class="t" style="left:30.56px;top:397.60px;font-size:42.6px;line-height:42.6px;color:#000;transform:scaleX(0.9595);">7</span>
<div style="left:0px;top:511.6px;width:85px;height:1px;background:#bdbdbd;"></div>
<span class="t" style="left:30.33px;top:461.60px;font-size:42.6px;line-height:42.6px;color:#000;transform:scaleX(0.9787);">8</span>
<div style="left:0px;top:575.6px;width:85px;height:1px;background:#bdbdbd;"></div>
<span class="t" style="left:30.15px;top:525.60px;font-size:42.6px;line-height:42.6px;color:#1e6f41;transform:scaleX(1.0197);">9</span>
</div>
</div>
<div class="tabbar" style="left:0px;top:949px;width:1565px;height:35px;background:#e6e6e6;border-bottom:1px solid #bcbcbc;">
<div class="topline" style="left:0px;top:0px;width:1535px;height:1px;background:#8e8e8e;"></div>
<svg style="left:28.6px;top:11px;" width="7.2" height="10.8" viewBox="0 0 7.2 10.8"><path d="M7.2 0V10.8L0 5.4Z" fill="#c3c3c3"/></svg>
<svg style="left:63.8px;top:11px;" width="7.2" height="10.8" viewBox="0 0 7.2 10.8"><path d="M0 0V10.8L7.2 5.4Z" fill="#c3c3c3"/></svg>
<div class="sheettab" style="left:118.3px;top:0px;width:88.8px;height:31px;background:#fff;border-left:1px solid #8e8e8e;border-right:1px solid #8e8e8e;border-bottom:2px solid #217346;">
<span class="t" style="left:11.07px;top:5.00px;font-size:20px;line-height:20px;color:#217346;font-weight:700;transform:scaleX(0.9581);">Sheet1</span>
</div>
<svg style="left:246px;top:6px;" width="22" height="22" viewBox="0 0 22 22"><g fill="none" stroke="#808080" stroke-width="1.2"><circle cx="11" cy="11" r="10.4"/><path d="M11 6V15.8M6.1 10.9H15.9" stroke="#707070" stroke-width="1.6"/></g></svg>
<svg style="left:934.6px;top:9px;" width="3.4" height="15" viewBox="0 0 3.4 15"><g fill="#b0b0b0"><rect x="0" y="0" width="3.2" height="2.8"/><rect x="0" y="5.8" width="3.2" height="2.8"/><rect x="0" y="11.6" width="3.2" height="2.8"/></g></svg>
<div class="hscroll" style="left:955px;top:4px;width:580.6px;height:24.8px;background:#dadada;">
<div class="sbtn" style="left:0px;top:0px;width:25.4px;height:24.8px;background:#fff;border:1px solid #666;">
<svg style="left:7.6px;top:6.4px;" width="6.4" height="10.6" viewBox="0 0 6.4 10.6"><path d="M6.4 0V10.6L0 5.3Z" fill="#666"/></svg>
</div>
<div class="thumb" style="left:25px;top:0px;width:397.8px;height:24.8px;background:#fff;border:1px solid #666;"></div>
<div class="sbtn" style="left:556.2px;top:0px;width:24.4px;height:24.8px;background:#fff;border:1px solid #666;">
<svg style="left:8.2px;top:6.4px;" width="6.4" height="10.6" viewBox="0 0 6.4 10.6"><path d="M0 0V10.6L6.4 5.3Z" fill="#555"/></svg>
</div>
</div>
</div>
<div class="vscroll" style="left:1537.2px;top:306.3px;width:24.6px;height:644.2px;background:#dadada;">
<div class="sbtn" style="left:0px;top:0px;width:24.6px;height:24.4px;background:#fff;border:1px solid #7a7a7a;">
<svg style="left:5.8px;top:7.9px;" width="11" height="6" viewBox="0 0 11 6"><path d="M0 6L5.5 0L11 6Z" fill="#777"/></svg>
</div>
<div class="thumb" style="left:0px;top:24.7px;width:24.6px;height:266.8px;background:#fff;border:1px solid #666;"></div>
<div class="sbtn" style="left:0px;top:619.9px;width:24.6px;height:24.3px;background:#fff;border:1px solid #7a7a7a;">
<svg style="left:5.8px;top:9px;" width="11" height="5.8" viewBox="0 0 11 5.8"><path d="M0 0L5.5 5.8L11 0Z" fill="#6e6e6e"/></svg>
</div>
</div>
<footer class="statusbar" style="left:0px;top:984px;width:1565px;height:32px;background:#f3f2f1;">
<span class="t" style="left:11.21px;top:9.00px;font-size:15.3px;line-height:15.3px;color:#505050;transform:scaleX(0.9739);">Edit</span>
<svg style="left:81px;top:7px;" width="22" height="20" viewBox="0 0 22 20"><g fill="none" stroke="#505050" stroke-width="1.5"><path d="M7.6 18.6H1V0.9H20.6V7.4"/><path d="M1 3.6H20.6" stroke-width="1.4"/><path d="M3.4 8.4H8.4M3.4 11.4H7M3.4 14.4H6.4" stroke-width="1.2"/><circle cx="15" cy="12.6" r="6.2"/><circle cx="15" cy="12.6" r="2.7" fill="#505050" stroke="none"/></g></svg>
<svg style="left:128px;top:5.5px;" width="22" height="22" viewBox="0 0 22 22"><g fill="none" stroke="#505050" stroke-width="1.4" stroke-linejoin="round" stroke-linecap="round"><circle cx="9.45" cy="2.8" r="2.2"/><path d="M11.9 6.2L16.8 3.6Q18.4 3.4 17.9 5L13 8.2V11"/><path d="M6.9 6.2L1.7 3.9Q0.2 4 0.7 5.5L6 8.3V13.6L3.7 19.4Q4.6 20.8 6 19.9L9.4 14.4L10.6 16"/><path d="M6.9 6.2H11.9"/><path d="M11 10.8L21.2 20.6M21.2 10.8L11 20.6" stroke-width="1.5"/></g></svg>
<span class="t" style="left:156.60px;top:9.00px;font-size:15.3px;line-height:15.3px;color:#505050;transform:scaleX(0.9924);">Accessibility: Investigate</span>
<svg style="left:1122.3px;top:5px;" width="20.4" height="20" viewBox="0 0 20.4 20"><g fill="none" stroke="#b9b9b9" stroke-width="1.5"><rect x="0.8" y="0.8" width="18.6" height="18.2"/><path d="M7 0.8V19M13.2 0.8V19M0.8 6.9H19.4M0.8 13H19.4"/></g></svg>
<svg style="left:1182.3px;top:5px;" width="21.6" height="20" viewBox="0 0 21.6 20"><g fill="none" stroke="#b9b9b9" stroke-width="1.3"><rect x="0.7" y="0.7" width="20" height="18.4"/><rect x="4.4" y="3.6" width="12.6" height="12.6"/><path d="M7.2 7.2H14.2M7.2 10H14.2M7.2 12.8H14.2"/></g></svg>
<svg style="left:1242.6px;top:5px;" width="21.6" height="20" viewBox="0 0 21.6 20"><g fill="none" stroke="#b9b9b9" stroke-width="1.5"><path d="M0.8 19V0.8H20.6V19Z"/><path d="M5.8 0.8V10H14.2V0.8M0.8 10H5.8" stroke-width="1.5"/></g></svg>
<svg style="left:1290.4px;top:15px;" width="12.4" height="2" viewBox="0 0 12.4 2"><path d="M0 1H12.2" stroke="#b9b9b9" stroke-width="1.4"/></svg>
<div class="zoomline" style="left:1310.8px;top:15px;width:148px;height:1.6px;background:#4a4a4a;"></div>
<div class="zoomtick" style="left:1384.2px;top:10px;width:2px;height:11.4px;background:#4a4a4a;"></div>
<svg style="left:1468.4px;top:9.6px;" width="12.4" height="12.4" viewBox="0 0 12.4 12.4"><path d="M0 6.2H12.4M6.2 0V12.4" stroke="#b9b9b9" stroke-width="1.4"/></svg>
<span class="t" style="left:1497.01px;top:9.00px;font-size:15.3px;line-height:15.3px;color:#b3b3b3;transform:scaleX(1.0309);">220%</span>
</footer>
<section class="dialog" style="left:427.2px;top:299.8px;width:989.8px;height:558.4px;background:#f0f0f0;border:1px solid #6a6a6a;box-shadow:0 5px 18px rgba(0,0,0,0.40);">
<div class="dlgtitle" style="left:0px;top:0px;width:987.8px;height:44.4px;background:#fff;"></div>
<span class="t" style="left:10.75px;top:14.20px;font-size:18.4px;line-height:18.4px;color:#000;transform:scaleX(0.9836);">Function Arguments</span>
<span class="t" style="left:879.53px;top:13.20px;font-size:19.5px;line-height:19.5px;color:#000;transform:scaleX(0.7372);">?</span>
<svg style="left:945.8px;top:14px;" width="15.4" height="15.4" viewBox="0 0 15.4 15.4"><path d="M0.3 0.3L15.1 15.1M15.1 0.3L0.3 15.1" fill="none" stroke="#000" stroke-width="1.15"/></svg>
<div class="groupbox" style="left:10px;top:65.4px;width:966.8px;height:210.4px;border:1px solid #dcdcdc;"></div>
<div style="left:16.8px;top:57.2px;width:52px;height:16px;background:#f0f0f0;"></div>
<span class="t" style="left:20.19px;top:59.20px;font-size:15.8px;line-height:15.8px;color:#000;transform:scaleX(0.8612);">STDEV</span>
<div class="annot" style="left:140.2px;top:79.2px;width:558px;height:47.4px;border:5.6px solid #000;border-radius:8px;"></div>
<span class="t" style="left:150.73px;top:95.20px;font-size:16.4px;line-height:16.4px;color:#000;font-weight:700;transform:scaleX(1.0061);">Number1</span>
<div class="input" style="left:237.4px;top:87.4px;width:288.2px;height:31.4px;background:#fff;border:1px solid #a9a9a9;">
<div class="sel" style="left:4.3px;top:3.1px;width:39px;height:21px;background:#c9c9c9;"></div>
<span class="t" style="left:4.47px;top:7.80px;font-size:15.8px;line-height:15.8px;color:#222;transform:scaleX(0.8901);">B2:B8</span>
<div class="caret" style="left:43.4px;top:3.1px;width:1px;height:21px;background:#000;"></div>
</div>
<div class="refbtn" style="left:525.3px;top:87.4px;width:32.6px;height:31.4px;background:#fff;border:5px solid #e1e1e1;outline:1px solid #adadad;outline-offset:-1px;">
<svg style="left:4px;top:1.8px;" width="12.4" height="15" viewBox="0 0 12.4 15"><g fill="#000"><path d="M6.5 0L12 6.2H8V11.2H5V6.2H1Z"/><rect x="0.6" y="13.2" width="11.8" height="1.4"/></g></svg>
</div>
<span class="t" style="left:574.32px;top:96.20px;font-size:15.8px;line-height:15.8px;color:#000;transform:scaleX(0.9088);">=</span>
<span class="t" style="left:600.19px;top:96.20px;font-size:15.8px;line-height:15.8px;color:#000;transform:scaleX(0.9048);">{5;8;4;9;8;3;7}</span>
<span class="t" style="left:156.10px;top:133.20px;font-size:15.8px;line-height:15.8px;color:#000;transform:scaleX(1.0308);">Number2</span>
<div class="input" style="left:237.4px;top:125.6px;width:288.2px;height:30.2px;background:#fff;border:1px solid #a9a9a9;border-top-color:#c9c9c9;">
</div>
<div class="refbtn" style="left:525.3px;top:125.6px;width:32.6px;height:30.2px;background:#fff;border:5px solid #e1e1e1;outline:1px solid #adadad;outline-offset:-1px;">
<svg style="left:4px;top:1.2px;" width="12.4" height="15" viewBox="0 0 12.4 15"><g fill="#000"><path d="M6.5 0L12 6.2H8V11.2H5V6.2H1Z"/><rect x="0.6" y="13.2" width="11.8" height="1.4"/></g></svg>
</div>
<span class="t" style="left:574.32px;top:133.20px;font-size:15.8px;line-height:15.8px;color:#000;transform:scaleX(0.9088);">=</span>
<span class="t" style="left:599.35px;top:133.20px;font-size:15.8px;line-height:15.8px;color:#a0a0a0;font-weight:700;transform:scaleX(1.0232);">number</span>
<div class="annot" style="left:555.1px;top:271.2px;width:154.2px;height:49px;background:#f0f0f0;border:5.6px solid #000;border-radius:8px;"></div>
<span class="t" style="left:574.06px;top:287.20px;font-size:15.8px;line-height:15.8px;color:#000;transform:scaleX(0.9867);">=</span>
<span class="t" style="left:599.01px;top:287.20px;font-size:15.8px;line-height:15.8px;color:#000;">2.288688541</span>
<span class="t" style="left:10.49px;top:313.20px;font-size:15.8px;line-height:15.8px;color:#000;transform:scaleX(0.9934);">This function is available for compatibility with Excel 2007 and earlier.</span>
<span class="t" style="left:9.56px;top:334.20px;font-size:15.8px;line-height:15.8px;color:#000;transform:scaleX(0.9785);">Estimates standard deviation based on a sample (ignores logical values and text in the sample).</span>
<span class="t" style="left:261.92px;top:372.20px;font-size:16.4px;line-height:16.4px;color:#000;font-weight:700;transform:scaleX(1.0119);">Number1:</span>
<span class="t" style="left:352.58px;top:373.20px;font-size:15.8px;line-height:15.8px;color:#000;transform:scaleX(0.9921);">number1,number2,... are 1 to 255 numbers corresponding to a sample of a population and</span>
<span class="t" style="left:352.94px;top:394.20px;font-size:15.8px;line-height:15.8px;color:#000;transform:scaleX(0.9873);">can be numbers or references that contain numbers.</span>
<div class="hr" style="left:10px;top:449.8px;width:966.8px;height:1px;background:#d4d4d4;"></div>
<span class="t" style="left:9.52px;top:474.20px;font-size:15.8px;line-height:15.8px;color:#000;transform:scaleX(1.0095);">Formula result =</span>
<span class="t" style="left:141.31px;top:474.20px;font-size:15.8px;line-height:15.8px;color:#000;">2.288688541</span>
<a class="t" style="left:9.52px;top:521.20px;font-size:15.8px;line-height:15.8px;color:#1565c8;transform:scaleX(1.0128);text-decoration:underline;text-decoration-thickness:1px;text-underline-offset:2px;">Help on this function</a>
<span class="t" style="left:472.91px;top:512.20px;font-size:25.4px;line-height:25.4px;color:#000;font-weight:700;font-family:'DejaVu Sans','Liberation Sans',sans-serif;transform:scaleX(0.9895);">OK Button</span>
<svg style="left:624.8px;top:516.2px;" width="78" height="21" viewBox="0 0 78 21"><path d="M0.8 8.6H53V13.6H0.8Z" fill="#000"/><path d="M47.4 0.6L77.4 11L47.4 20.4L53.6 11Z" fill="#000"/></svg>
<div class="annot" style="left:702.2px;top:498.3px;width:143.3px;height:57.4px;border:5.6px solid #000;border-radius:8px;"></div>
<button class="btn" style="left:712.4px;top:509.3px;width:125px;height:35.8px;background:#e1e1e1;border:2px solid #0078d7;">
<span class="t" style="left:49.66px;top:8.90px;font-size:15.8px;line-height:15.8px;color:#000;transform:scaleX(0.9016);">OK</span>
</button>
<button class="btn" style="left:852.8px;top:509.3px;width:124px;height:35.8px;background:#e1e1e1;border:1px solid #adadad;">
<span class="t" style="left:38.36px;top:9.90px;font-size:15.8px;line-height:15.8px;color:#000;transform:scaleX(0.9333);">Cancel</span>
</button>
</section>
</div>
</div></body></html>
